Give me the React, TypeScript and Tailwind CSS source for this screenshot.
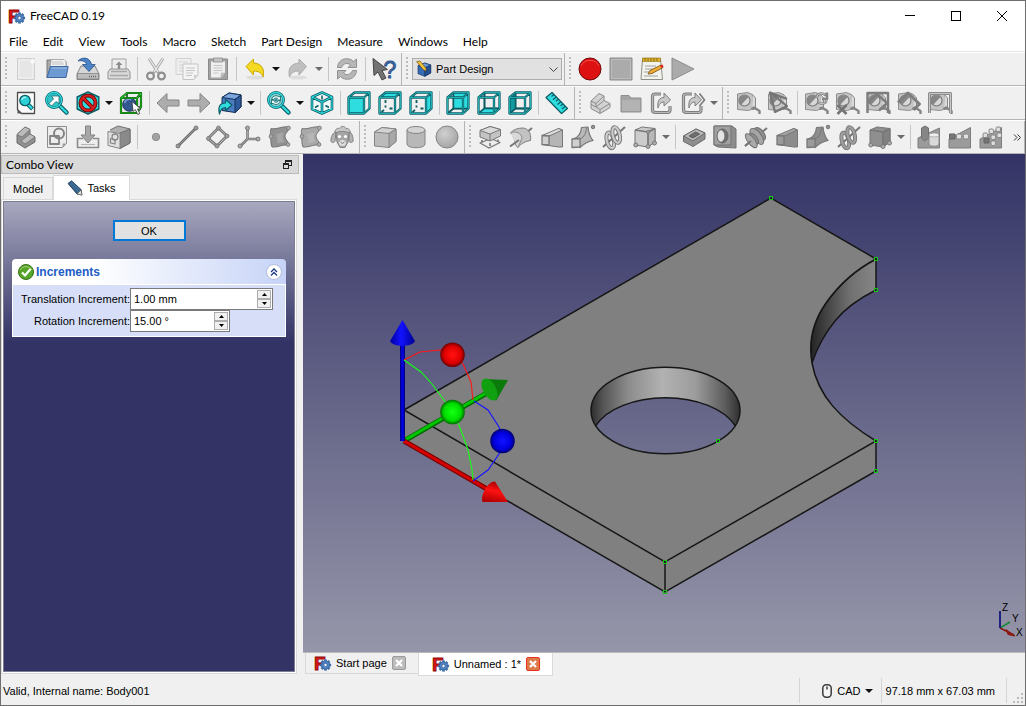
import { useState } from "react"
import type { ReactNode } from "react"

type IconProps = { children: ReactNode; size?: number }

const Icon = ({ children, size = 24 }: IconProps) => (
  <svg width={size} height={size} viewBox="0 0 24 24" fill="none" strokeLinejoin="round" className="shrink-0 overflow-visible" aria-hidden="true">
    {children}
  </svg>
)

const G = "#8a8a8a"
const D = "#777777"
const M = "#aeaeae"
const TEAL = "#2edde0"
const TEAL_DARK = "#0c5c63"

const GEAR_TEETH = [0, 45, 90, 135, 180, 225, 270, 315]

const FreeCadLogo = () => (
  <svg width="16" height="16" viewBox="0 0 16 16" className="shrink-0 overflow-visible" aria-hidden="true">
    <text x="-1" y="14.5" fontSize="19" fontWeight="700" fontFamily="Liberation Sans, sans-serif" fill="#e01515" stroke="#8a0b0b" strokeWidth="0.9">F</text>
    <g transform="translate(10.5 10)">
      {GEAR_TEETH.map((a) => (
        <rect key={a} x="-1.3" y="-5.6" width="2.6" height="3" fill="#3f6ea8" transform={`rotate(${a})`} />
      ))}
      <circle r="4.2" fill="#4f82c0" stroke="#2d5590" strokeWidth="0.6" />
      <circle r="1.6" fill="#fff" stroke="#2d5590" strokeWidth="0.6" />
    </g>
  </svg>
)

/* ---------- file & edit ---------- */

const NewIcon = () => (
  <Icon>
    <path d="M3.500 1.500h17v21h-17z" fill="#ececec" stroke="#cfcfcf" />
    <path d="M6 4h12v16H6z" fill="#e6e6e6" />
    <circle cx="18.500" cy="4.500" r="2.800" fill="#f8f8f8" stroke="#dcdcdc" strokeWidth="0.6" />
  </Icon>
)

const OpenIcon = () => (
  <Icon>
    <path d="M2 21V3h7l1.500 2H21v5" fill="#a9a9a9" stroke="#787878" />
    <path d="M6 2.500h13l2 2V12H5z" fill="#f2f2f2" stroke="#9a9a9a" strokeWidth="0.8" />
    <path d="M7 5h11M7 7h12" stroke="#b5b5b5" strokeWidth="0.8" />
    <path d="M5.500 9.500H23.200L21 20.500H2z" fill="#6d9ad0" stroke="#3c67a3" />
    <path d="M6.500 11H22" stroke="#9fc0e6" />
  </Icon>
)

const SaveIcon = () => (
  <Icon>
    <path d="M5 9h14l4 8v5.500H1V17z" fill="#d6d6d6" stroke="#858585" />
    <path d="M1.500 16.500h21v5.500h-21z" fill="#bdbdbd" stroke="#858585" strokeWidth="0.8" />
    <path d="M13 19.500h7" stroke="#666" strokeDasharray="1 1" strokeWidth="1.500" />
    <path d="M2 4C6-.5 14 0 15.500 7.500h3.700L13 14.500 6.500 7.500h4C10 4.500 6 3 2 4z" fill="#4c82c6" stroke="#265089" strokeWidth="0.8" />
  </Icon>
)

const PrintIcon = () => (
  <Icon>
    <path d="M5 13V2h14v11" fill="#ededed" stroke="#a2a2a2" />
    <path d="M10.800 12V8H8.500L12 4.500 15.500 8h-2.300v4z" fill="#8d8d8d" />
    <path d="M3 12h18l2 3v7H1v-7z" fill="#dadada" stroke="#929292" />
    <path d="M4 14.500h16M3 18.500h18" stroke="#a7a7a7" strokeWidth="1.600" />
  </Icon>
)

const CutIcon = () => (
  <Icon>
    <path d="M5 1.500L14.500 16M19 1.500L9.500 16" stroke="#a5a5a5" strokeWidth="3" />
    <path d="M5 1.500L14 15M19 1.500L10 15" stroke="#efefef" strokeWidth="1.300" />
    <circle cx="6.500" cy="19" r="3.400" stroke="#8e8e8e" strokeWidth="2.200" />
    <circle cx="17.500" cy="19" r="3.400" stroke="#8e8e8e" strokeWidth="2.200" />
  </Icon>
)

const CopyIcon = () => (
  <Icon>
    <path d="M1 1.500h15v16H1z" fill="#eeeeee" stroke="#d2d2d2" />
    <path d="M4 5h9M4 8h9M4 11h5M4 14h5" stroke="#d4d4d4" />
    <path d="M8 7h15v11l-4 4.500H8z" fill="#f4f4f4" stroke="#c4c4c4" />
    <path d="M11 11h9M11 13.500h9M11 16h7M11 18.500h6" stroke="#c4c4c4" strokeWidth="1.200" />
    <path d="M23 18h-4v4.500z" fill="#d0d0d0" />
  </Icon>
)

const PasteIcon = () => (
  <Icon>
    <path d="M2.500 2h19v20.500h-19z" fill="#a2a2a2" stroke="#8a8a8a" />
    <path d="M5 4.500h14V16l-4 4.500H5z" fill="#efefef" />
    <path d="M19 16h-4v4.500z" fill="#c6c6c6" stroke="#aaa" strokeWidth="0.500" />
    <path d="M7.500 8.500h9M7.500 11h9M7.500 13.500h9M7.500 16h5" stroke="#c5c5c5" />
    <path d="M7.500 1h9v4h-9z" fill="#c4c4c4" stroke="#8a8a8a" strokeWidth="0.800" />
  </Icon>
)

const UndoIcon = ({ off }: { off?: boolean }) => (
  <Icon>
    <ellipse cx="12" cy="20.500" rx="9" ry="2" fill="#dddddd" />
    <path
      d="M3 9.500L10.500 2v4C18 6.500 22 11 20 20c-1.500-4-4-6-9.500-6v4z"
      fill={off ? "#bfbfbf" : "#f5da24"}
      stroke={off ? "#aaaaaa" : "#c9a500"}
      transform={off ? "translate(23.500 0) scale(-1 1)" : undefined}
    />
  </Icon>
)

const RefreshIcon = () => (
  <Icon>
    <path d="M2.500 10.500C3 1 14-.5 18.500 4.500L21.500 2v8.500h-8.500l2.500-2.500C12.500 5 8 6.500 6.500 10.500zM21.500 13.500c-.500 9.500-11.500 11-16 6L2.500 22v-8.500H11L8.500 16c3 3 7.500 1.500 9-2.500z" fill="#b7b7b7" stroke="#909090" />
  </Icon>
)

const WhatsThisIcon = () => (
  <Icon>
    <path d="M1 1.500l1 17 4-3.500 4 8 4-2-4-7.500 5.500-1z" fill="#727272" stroke="#454545" />
    <text x="11.500" y="20.500" fontSize="23" fontFamily="Liberation Sans, sans-serif" fill="#3f6dab" stroke="#2b5188" strokeWidth="0.900">?</text>
  </Icon>
)

const BodyCubeIcon = ({ size = 16 }: { size?: number }) => (
  <Icon size={size}>
    <path d="M3 7l10-4 9 3v12l-9 5-10-4z" fill="#356cb4" stroke="#153666" />
    <path d="M13 10l9-4v12l-9 5z" fill="#254f8c" stroke="#153666" />
    <path d="M3 7l10-4 9 3-9 4z" fill="#6b9ad8" stroke="#153666" />
    <path d="M1 1l5-1 9 11v4l-4-2z" fill="#f4c43a" stroke="#6e4b0c" />
  </Icon>
)

const RecordIcon = () => (
  <Icon>
    <circle cx="12" cy="12" r="11" fill="#dd1111" stroke="#6e0707" />
    <path d="M3 9a10 10 0 0118 0" stroke="#f25050" strokeWidth="1" />
  </Icon>
)
const StopIcon = () => (
  <Icon>
    <path d="M1 1h22v22H1z" fill="#ababab" stroke="#8b8b8b" />
    <path d="M2.500 2.500h19v19h-19z" stroke="#bcbcbc" />
  </Icon>
)
const MacroIcon = () => (
  <Icon>
    <path d="M2.500 2h18l2 20.500H1z" fill="#f3f3ee" stroke="#8f8f84" />
    <path d="M2.500 1h18v3.500h-18z" fill="#e0b52e" stroke="#8a6a12" strokeWidth="0.600" />
    <path d="M5 1v3M8 1v3M11 1v3M14 1v3M17 1v3" stroke="#8a6a12" />
    <path d="M5 9h11M5 12h8M4 15h5M4 19h14" stroke="#a0a0a0" />
    <path d="M8 17l2-3.500L21 8l2 2.500-11 6z" fill="#efab35" stroke="#704808" strokeWidth="0.800" />
    <path d="M20 8.500l2.500-1 1 2.500-2 1z" fill="#e01d1d" />
  </Icon>
)
const PlayIcon = () => (
  <Icon>
    <path d="M1 1l22 11L1 23z" fill="#ababab" stroke="#8b8b8b" />
  </Icon>
)

/* ---------- view ---------- */

const Lens = ({ children }: { children?: ReactNode }) => (
  <>
    <path d="M14 14l7.500 7.500" stroke={TEAL_DARK} strokeWidth="4.500" strokeLinecap="round" />
    <path d="M14 14l7.500 7.500" stroke={TEAL} strokeWidth="2.200" strokeLinecap="round" />
    <circle cx="9" cy="9" r="7.500" fill="#bdeef0" stroke={TEAL_DARK} strokeWidth="2.800" />
    <circle cx="9" cy="9" r="7.500" stroke={TEAL} strokeWidth="1.300" />
    {children}
  </>
)

const FitAllIcon = () => (
  <Icon>
    <path d="M3.500 1.500h17v21H7.500l-4-4z" fill="#fcfcfc" stroke="#4c4c4c" strokeWidth="1.300" />
    <path d="M3.500 18.500L8 22.500H3.500z" fill="#555" />
    <path d="M13 12.500l5.500 5.500" stroke={TEAL_DARK} strokeWidth="4.200" />
    <path d="M13 12.500l5 5" stroke={TEAL} strokeWidth="2.200" />
    <circle cx="11" cy="9.500" r="5.200" fill="#2bd0d6" stroke={TEAL_DARK} strokeWidth="1.300" />
    <path d="M8 9c0-2 2-3 4-2.500" stroke="#c3f5f5" strokeWidth="1.200" />
  </Icon>
)
const FitSelectionIcon = () => (
  <Icon>
    <Lens>
      <circle cx="9" cy="9" r="6.500" fill="#30c4c9" />
      <path d="M4 12.500L8.500 8 6.500 5H14v7.500L11 10.500l-4.500 4.500z" fill="#fff" stroke={TEAL_DARK} strokeWidth="0.700" />
    </Lens>
  </Icon>
)
const DrawStyleIcon = () => (
  <Icon>
    <path d="M12 .8L22.800 6v12L12 23.200 1.200 18V6z" fill={TEAL} stroke={TEAL_DARK} strokeWidth="1.400" />
    <circle cx="12" cy="12" r="7.500" stroke="#6d0808" strokeWidth="4" />
    <path d="M6.800 6.800l10.400 10.400" stroke="#6d0808" strokeWidth="4" />
    <circle cx="12" cy="12" r="7.500" stroke="#d81e1e" strokeWidth="2.200" />
    <path d="M6.800 6.800l10.400 10.400" stroke="#d81e1e" strokeWidth="2.200" />
  </Icon>
)
const BoxSelectIcon = () => (
  <Icon>
    <path d="M8 2h14v14H8z" stroke="#0b4d0b" strokeWidth="1.600" />
    <circle cx="10.500" cy="13.500" r="6.800" fill="#33588f" stroke="#172f56" />
    <path d="M5.500 12c1-3 4-4 6.500-3.500" stroke="#7ea3d6" strokeWidth="1.500" />
    <path d="M2 7l6-5h14l-4 5zM2 7h16v15H2zM22 2v14l-4 6" stroke="#0b4d0b" strokeWidth="2.200" />
    <path d="M2 7l6-5h14l-4 5zM2 7h16v15H2zM22 2v14l-4 6" stroke="#25c425" strokeWidth="1.100" />
    <path d="M13 10.500l1 10 2.300-2 2.500 5 2-1-2.300-4.500h3.500z" fill="#fff" stroke="#333" strokeWidth="0.800" />
  </Icon>
)
const ArrowIcon = ({ right }: { right?: boolean }) => (
  <Icon>
    <path d="M1 12L11 2.500V9h12v6H11v6.500z" fill="#adadad" stroke="#858585" transform={right ? "translate(24 0) scale(-1 1)" : undefined} />
  </Icon>
)
const LinkIcon = () => (
  <Icon>
    <path d="M4 6.500L11 2l12 2v12l-6 5.500-13-2z" fill="#4a7dc2" stroke="#132e55" />
    <path d="M4 6.500L11 2l12 2-6 4.500z" fill="#7ba4dc" stroke="#132e55" />
    <path d="M17 8.500L23 4v12l-6 5.500z" fill="#2f5b9c" stroke="#132e55" />
    <path d="M1.500 23c-2-8 1-11 6-11V8.500L14 14l-6.500 5.500v-3c-3 0-5 2-6 6.500z" fill={TEAL} stroke={TEAL_DARK} strokeWidth="1.200" />
  </Icon>
)
const ZoomSyncIcon = () => (
  <Icon>
    <Lens>
      <circle cx="9" cy="9" r="6.300" fill="#7fd0d4" />
      <path d="M4.500 8.500C6 4 10 4 12 6l1.500-1v4h-4.500l1.500-1.500C9 6.500 7.500 7 6.500 8.500zM13.500 9.700c-1.500 4.500-5.500 4.500-7.500 2.500l-1.500 1v-4h4.500l-1.500 1.500c1.500 1 3 .500 4-1z" fill="#e8fbfb" stroke={TEAL_DARK} strokeWidth="0.800" />
    </Lens>
  </Icon>
)
const ISO = "M12 1.500L22 6v12l-10 4.500L2 18V6zM2 6l10 5 10-5M12 11v11.500"
const IsoIcon = () => (
  <Icon>
    <path d={ISO} fill="#eefcfc" stroke={TEAL_DARK} strokeWidth="2.600" />
    <path d={ISO} stroke={TEAL} strokeWidth="1.100" />
    <path d="M12 4.500v4M5 16.500l3.500-2M19 16.500l-3.500-2" stroke={TEAL_DARK} strokeWidth="1.500" />
  </Icon>
)

const FACES = {
  front: "1.500,6.500 17,6.500 17,22.500 1.500,22.500",
  top: "1.500,6.500 17,6.500 22.500,1.500 7.500,1.500",
  right: "17,6.500 22.500,1.500 22.500,17.500 17,22.500",
  rear: "7.500,1.500 22.500,1.500 22.500,17.500 7.500,17.500",
  bottom: "1.500,22.500 17,22.500 22.500,17.500 7.500,17.500",
  left: "1.500,6.500 7.500,1.500 7.500,17.500 1.500,22.500",
}
const BACK_EDGES = "M7.500 1.500v16h15M7.500 17.500l-6 5"
const FRONT_EDGES = "M1.500 6.500h15.500v16H1.500zM1.500 6.500l6-5h15l-5.500 5M22.500 1.500v16l-5.500 5"

const CubeFaceIcon = ({ face }: { face: keyof typeof FACES }) => {
  const inFront = face === "top" || face === "right"
  return (
    <Icon>
      {inFront && <path d="M7.500 9v3M7.500 14.500v2M11.500 17.500h3M6 19l-2.500 2" stroke={TEAL_DARK} strokeWidth="1.800" />}
      {!inFront && face !== "front" && <path d={BACK_EDGES} stroke={TEAL_DARK} strokeWidth="1.800" />}
      <polygon points={FACES[face]} fill={face === "left" ? "#129aa0" : TEAL} />
      {!inFront && face !== "front" && <path d={BACK_EDGES} stroke={TEAL_DARK} strokeWidth="1.400" />}
      <path d={FRONT_EDGES} stroke={TEAL_DARK} strokeWidth="2.300" />
      <path d={FRONT_EDGES} stroke="#21b8bd" strokeWidth="0.900" />
    </Icon>
  )
}

const RulerIcon = () => (
  <Icon>
    <path d="M1 6.500L7 1.500 22.500 17.500 16.500 22.500z" fill={TEAL} stroke={TEAL_DARK} strokeWidth="1.200" />
    <path d="M9 3.500l-2.500 2M11.300 6L8 8.800M13.500 8.300L11 10.300M15.800 10.700l-3.300 2.800M18 13l-2.500 2M20.300 15.300L17 18" stroke={TEAL_DARK} strokeWidth="1.200" />
  </Icon>
)

/* ---------- structure ---------- */

const PartIcon = () => (
  <Icon>
    <path d="M3 10l8-7.500 5 2.500v4.500l6 3v4L12 22.500l-9-5z" fill="#d2d2d2" stroke={G} />
    <path d="M3 10l5 2.500 8-7.500M8 12.500v3.500l4 2.500 10-6M12 18.500v4M3 13.500l5 2.500 8-6.500" stroke={G} />
  </Icon>
)
const GroupIcon = () => (
  <Icon>
    <path d="M2 21V4.500h8l2 2.500h10v14z" fill="#a4a4a4" stroke="#8f8f8f" />
    <path d="M3 9h18v11H3z" fill="#b3b3b3" />
  </Icon>
)
const ExportIcon = ({ twice }: { twice?: boolean }) => (
  <Icon>
    <path d="M11 3H5Q2.500 3 2.500 5.500v13Q2.500 21.500 5.500 21.500h12q2.500 0 2.500-2.500v-4" stroke="#7e7e7e" strokeWidth="3.200" />
    <path d="M11 3H5Q2.500 3 2.500 5.500v13Q2.500 21.500 5.500 21.500h12q2.500 0 2.500-2.500v-4" stroke="#b9b9b9" strokeWidth="1.200" />
    <path d="M8 17C7 9 10 6.500 14 6.500V2l6.500 7-6.500 6v-4c-3 0-5 2-6 6z" fill="#c8c8c8" stroke="#7e7e7e" />
    {twice && <path d="M18.500 2.500L23.500 9l-5 6" stroke="#7e7e7e" strokeWidth="1.700" />}
  </Icon>
)

/* ---------- measure ---------- */

const MeasureIcon = ({ kind }: { kind?: "angle" | "refresh" | "clear" | "toggle" | "delta" | "toggle3d" }) => (
  <Icon>
    <path d="M1.500 3l10-1.500 5 2V18l-4 1.500-11-1z" fill="#c4c4c4" stroke="#8e8e8e" />
    <path d="M16.500 3.500l3 3.500V18l-3.500.500" fill="#dadada" stroke="#8a8a8a" />
    <circle cx="8.500" cy="9.500" r="5.500" fill="#d8d8d8" stroke="#787878" strokeWidth="1.200" />
    <path d="M12.500 6a5.500 5.500 0 10-7.500 8z" fill="#868686" />
    <path d="M15.500 18l2.500-1.500L23.500 20v3" stroke="#858585" strokeWidth="2.400" />
    {kind === "angle" && <path d="M3 1.500L8 21 20 15zM3 1.500L20 8" stroke="#757575" strokeWidth="2.200" />}
    {kind === "refresh" && (
      <>
        <path d="M13 6.500c0-4.500 6-5 8-2.500l2-1.500V8h-5M22.500 9.500c-1 3.500-5 4-8 2" stroke="#858585" strokeWidth="2.600" />
        <path d="M13 6.500c0-4.500 6-5 8-2.500M22.500 9.500c-1 3.500-5 4-8 2" stroke="#cacaca" strokeWidth="1" />
      </>
    )}
    {kind === "clear" && <path d="M2.500 14l9 9M11.500 14l-9 9" stroke="#747474" strokeWidth="2.600" />}
    {kind === "toggle" && <path d="M1.500 22V2h20.500v20M1.500 12L11 3 21 12l-8 7.500" stroke="#7e7e7e" strokeWidth="2.500" />}
    {kind === "delta" && <path d="M1 11.500L11 2 22.500 13l-6 6" stroke="#7e7e7e" strokeWidth="3" />}
    {kind === "toggle3d" && <path d="M1.500 22V2.500h21V22" stroke="#8b8b8b" strokeWidth="3" />}
    {kind === "toggle3d" && <path d="M1.500 22V2.500h21V22" stroke="#c6c6c6" strokeWidth="1" />}
  </Icon>
)

/* ---------- part design ---------- */

const BodyIcon = () => (
  <Icon>
    <path d="M3 9.500l8-7.500 5 2.500v4.500l5 3v5L11 23l-8-5z" fill="#8f8f8f" stroke="#6c6c6c" />
    <path d="M3 9.500L11 2l5 2.500L8 12z" fill="#bcbcbc" stroke="#6c6c6c" strokeWidth="0.700" />
    <path d="M7 16l9-7 5 3-10 7z" fill="#bcbcbc" stroke="#6c6c6c" strokeWidth="0.700" />
  </Icon>
)
const SketchIcon = () => (
  <Icon>
    <path d="M2.500 1.500h19v17l-4 4h-15z" fill="#ededed" stroke="#8d8d8d" />
    <path d="M21.500 18.500h-4v4z" fill="#a0a0a0" />
    <circle cx="14" cy="8.500" r="5" stroke="#848484" strokeWidth="2" />
    <path d="M5 11h9v8H5z" stroke="#848484" strokeWidth="1.800" />
  </Icon>
)
const MapSketchIcon = () => (
  <Icon>
    <path d="M7 13.500H1.500v9h21v-9H17" fill="#ededed" stroke="#8c8c8c" strokeWidth="1.600" />
    <path d="M9.500 1h5v9H19l-7 8-7-8h4.500z" fill="#a7a7a7" stroke="#828282" />
    <path d="M5 19.500h14" stroke="#b5b5b5" />
  </Icon>
)
const ValidateIcon = () => (
  <Icon>
    <path d="M3 5l8-4 12 3v14l-10 5.500" fill="#b0b0b0" stroke="#6f6f6f" />
    <path d="M13 8l10-4v14l-10 5.500z" fill="#8a8a8a" stroke="#6f6f6f" />
    <path d="M1 6.500l12 2v15l-12-3z" fill="#e0e0e0" stroke="#858585" />
    <circle cx="8" cy="12" r="3" stroke="#858585" strokeWidth="1.300" />
    <path d="M3.500 13.500l4.500 1v4.500l-4.500-1z" stroke="#858585" strokeWidth="1.200" />
  </Icon>
)
const PointIcon = () => (
  <Icon>
    <circle cx="12" cy="12" r="3.700" fill="#a2a2a2" stroke="#8f8f8f" />
  </Icon>
)
const LineIcon = () => (
  <Icon>
    <path d="M3 21L21 3" stroke="#6f6f6f" strokeWidth="2.600" />
    <path d="M3 21L21 3" stroke="#a5a5a5" strokeWidth="0.800" />
    <circle cx="3" cy="21" r="2" fill="#9b9b9b" stroke={D} />
    <circle cx="21" cy="3" r="2" fill="#9b9b9b" stroke={D} />
  </Icon>
)
const PlaneIcon = () => (
  <Icon>
    <path d="M12.500 3L21 11 11 21 2 13.500z" stroke="#787878" strokeWidth="3" />
    <path d="M12.500 3L21 11 11 21 2 13.500z" stroke="#bdbdbd" strokeWidth="1" />
    <circle cx="12.500" cy="3" r="2" fill="#9b9b9b" stroke={D} strokeWidth="0.800" />
    <circle cx="21" cy="11" r="2" fill="#9b9b9b" stroke={D} strokeWidth="0.800" />
    <circle cx="11" cy="21" r="2" fill="#9b9b9b" stroke={D} strokeWidth="0.800" />
    <circle cx="2.500" cy="13.500" r="2" fill="#9b9b9b" stroke={D} strokeWidth="0.800" />
  </Icon>
)
const CsIcon = () => (
  <Icon>
    <path d="M10.500 2.500V14M10.500 14h11M10.500 14L3 21.500" stroke={D} strokeWidth="2.600" />
    <path d="M10.500 2.500V14M10.500 14h11M10.500 14L3 21.500" stroke="#a9a9a9" strokeWidth="0.900" />
    <circle cx="10.500" cy="3" r="2" fill={M} stroke={D} />
    <circle cx="21" cy="14" r="2" fill={M} stroke={D} />
    <circle cx="3" cy="21" r="2" fill={M} stroke={D} />
  </Icon>
)
const BinderIcon = ({ light }: { light?: boolean }) => (
  <Icon>
    <path d="M3 3.500C8 5 14 .800 21.500 2 21 6 16.500 8.500 17 12c.500 3 4 5 4 8.500-5-2-10 2-17 1.500C2 18 4 15 1.500 11.500 3 9 2 6 3 3.500z" fill={light ? "#a9a9a9" : "#929292"} stroke="#747474" />
    <path d="M8 9c3 0 5-2 8-1-2 2-1 6 0 9-3 0-4 1-7 1 1-3 0-6-1-9z" fill={light ? "#b6b6b6" : "#a6a6a6"} />
    <circle cx="20.500" cy="3" r="1.900" fill={M} stroke={D} strokeWidth="0.800" />
    <circle cx="3" cy="11.500" r="1.900" fill={M} stroke={D} strokeWidth="0.800" />
    <circle cx="20" cy="19.500" r="1.900" fill={M} stroke={D} strokeWidth="0.800" />
  </Icon>
)
const CloneIcon = () => (
  <Icon>
    <path d="M5 9C4 5 7 2.500 9.500 3.500 11 .500 15 1 16 3.500c3-.500 5 2.500 4 5.500z" fill="#c6c6c6" stroke="#8c8c8c" />
    <path d="M6 7C3 7 1 12 .800 16c1 2 3.500 2 4.200 0z" fill="#b4b4b4" stroke="#808080" />
    <path d="M19 7c3 0 4 5 4.200 9-1 2-3.500 2-4.200 0z" fill="#b4b4b4" stroke="#808080" />
    <path d="M6 8c3-2 10-2 13 0l-1 9-3 5.500h-5L7 17z" fill="#a6a6a6" stroke="#808080" />
    <circle cx="9.500" cy="11.500" r="1.600" fill="#fff" />
    <circle cx="15.500" cy="11.500" r="1.600" fill="#fff" />
    <ellipse cx="12.500" cy="18" rx="3.500" ry="3" fill="#dedede" />
    <path d="M10.500 17l2 1.500 2-1.500" stroke="#777" />
  </Icon>
)

const BoxIcon = () => (
  <Icon>
    <path d="M1.500 7L9 2.500l14 1.500v12.500L16 22.500 1.500 21z" fill="#bbbbbb" stroke="#858585" />
    <path d="M1.500 7L9 2.500l14 1.500-7 4.500z" fill="#d2d2d2" stroke="#858585" />
    <path d="M16 8.500L23 4v12.500l-7 6z" fill="#a8a8a8" stroke="#858585" />
  </Icon>
)
const CylinderIcon = () => (
  <Icon>
    <path d="M3 5v14c0 5 18 5 18 0V5" fill="#b8b8b8" stroke="#858585" />
    <ellipse cx="12" cy="5" rx="9" ry="3.500" fill="#d4d4d4" stroke="#858585" />
  </Icon>
)
const SphereIcon = () => (
  <Icon>
    <defs>
      <radialGradient id="sphere-tool" cx="0.400" cy="0.350" r="0.700">
        <stop offset="0" stopColor="#cfcfcf" />
        <stop offset="1" stopColor="#a4a4a4" />
      </radialGradient>
    </defs>
    <circle cx="12" cy="12" r="11" fill="url(#sphere-tool)" stroke="#858585" />
  </Icon>
)

const PadIcon = () => (
  <Icon>
    <path d="M2 18l9 5 11-5.500-9-4z" fill="#ececec" stroke={D} strokeWidth="1.300" />
    <path d="M2 5.500L12 1.500l10.500 3V11L12 16 2 12z" fill="#c4c4c4" stroke={D} />
    <path d="M2 5.500L12 1.500l10.500 3L12 9z" fill="#dadada" stroke={D} />
    <path d="M12 9v7" stroke={D} />
    <path d="M4 15v2M12 18v3M20 14.500V17" stroke={D} strokeWidth="1.600" />
  </Icon>
)
const RevolutionIcon = () => (
  <Icon>
    <path d="M17 8l6-5" stroke={D} strokeWidth="2" />
    <path d="M1.500 8C4 4.500 9 3 14 3c5 .500 8.500 5 7.500 12.500C18 16 12 18 9 22.500 5 21 7 12 1.500 8z" fill="#c2c2c2" stroke="#808080" />
    <path d="M1.500 8C7 5.500 12 8 13 13l-4 9.500" fill="#d8d8d8" stroke="#8c8c8c" />
    <path d="M1 21.500L10 15" stroke={D} strokeWidth="2" />
  </Icon>
)
const GrooveIcon = () => (
  <Icon>
    <path d="M1 21L23 3" stroke={D} strokeWidth="2" />
    <g stroke="#707070" transform="rotate(-38 12 12)">
      <ellipse cx="17" cy="12" rx="4" ry="7.500" fill="#8f8f8f" />
      <ellipse cx="13" cy="12" rx="4.500" ry="9.500" fill="#a5a5a5" />
      <ellipse cx="9" cy="12" rx="3.500" ry="6.500" fill="#8f8f8f" />
      <ellipse cx="6" cy="12" rx="3.500" ry="8.500" fill="#aaaaaa" />
    </g>
    <path d="M1 21l6-5" stroke={D} strokeWidth="1.800" />
  </Icon>
)
const LoftIcon = ({ dark }: { dark?: boolean }) => (
  <Icon>
    <path d="M9 10.500L18.500 3.500l4 1.500V22l-4 0L2 19.500z" fill={dark ? "#8c8c8c" : "#b5b5b5"} stroke={D} />
    <path d="M2 10.500L18.500 3.500l4 1.500-13.500 6z" fill={dark ? "#a4a4a4" : "#dedede"} stroke={D} />
    <path d="M2 10.500l7 .500v9l-7-.500z" fill={dark ? "#9a9a9a" : "#d0d0d0"} stroke={D} strokeWidth="1.300" />
  </Icon>
)
const SweepIcon = ({ dark }: { dark?: boolean }) => (
  <Icon>
    <path d="M3 13.500C8 12 10 8 10.500 2.500l6.500-.500C17.500 8 19 12 22 15.500c-5 1-9 3-13 7z" fill={dark ? "#8e8e8e" : "#b8b8b8"} stroke={D} strokeWidth="1.200" />
    <path d="M9 14C13.500 12 15 8 15.500 3" stroke={D} />
    <path d="M1 14l8-.500V22l-8 .500z" fill={dark ? "#9c9c9c" : "#d0d0d0"} stroke={D} strokeWidth="1.300" />
    <circle cx="22" cy="2" r="1.500" fill={M} stroke={D} strokeWidth="1.300" />
  </Icon>
)
const COILS = [7, 15]
const HelixIcon = ({ dark }: { dark?: boolean }) => (
  <Icon>
    <path d="M1 22L23 2" stroke={D} strokeWidth="2" />
    <g transform="rotate(-42 12 12)">
      {COILS.map((x) => (
        <g key={x} transform={`rotate(28 ${x} 12)`}>
          <ellipse cx={x} cy="12" rx="3.500" ry="8" stroke={D} strokeWidth="4" />
          <ellipse cx={x} cy="12" rx="3.500" ry="8" stroke={dark ? "#a0a0a0" : "#cccccc"} strokeWidth="2.200" />
        </g>
      ))}
    </g>
  </Icon>
)
const PrimitiveIcon = ({ dark }: { dark?: boolean }) => (
  <Icon>
    <path d="M2 5l7-3 13 1.500V17l-7 5-13-2z" fill={dark ? "#8f8f8f" : "#cccccc"} stroke={D} />
    <path d="M15 7l7-3.500V17l-7 5z" fill={dark ? "#818181" : "#b8b8b8"} stroke={D} />
    <path d="M2 5l13 2 7-3.500M15 7v14" stroke={D} strokeWidth="1.400" />
    <circle cx="2.800" cy="20" r="2" fill={M} stroke={D} />
    <circle cx="15" cy="21.500" r="2" fill={M} stroke={D} />
    <circle cx="21.500" cy="18" r="2" fill={M} stroke={D} />
    {!dark && <circle cx="15" cy="7" r="1.500" fill={M} stroke={D} />}
  </Icon>
)
const PocketIcon = () => (
  <Icon>
    <path d="M1.500 11L14 4l9 4v6l-12 7.500-9.500-5z" fill="#8f8f8f" stroke="#6b6b6b" />
    <path d="M1.500 11L14 4l9 4-12 8z" fill="#bababa" stroke="#6b6b6b" />
    <path d="M7 11l6.500-4 4 2-6.500 4z" fill="#6f6f6f" stroke="#5c5c5c" />
  </Icon>
)
const HoleIcon = () => (
  <Icon>
    <path d="M1 1h18l4 3v19l-18-1-4-2z" fill="#8e8e8e" stroke="#727272" />
    <path d="M1 1h17v19H1z" fill="#a0a0a0" stroke="#727272" />
    <ellipse cx="9.500" cy="11" rx="5.500" ry="7" fill="#707070" stroke="#666" />
    <ellipse cx="8" cy="11" rx="3.400" ry="5.800" fill="#e3e3e3" />
  </Icon>
)
const Wedge = () => <path d="M1 14L22.500 2.500v20.500H1z" fill="#9b9b9b" stroke="#7d7d7d" />
const FilletIcon = () => (
  <Icon>
    <path d="M1 13L22.500 3v20H1z" fill="#9b9b9b" stroke="#7d7d7d" />
    <path d="M4.500 3L8 1l3.500 2v10l-4 3-3-3z" fill="#868686" stroke="#6e6e6e" />
    <path d="M12 10c0-3 10-3 10 0v9c0 3-10 3-10 0z" fill="#d9d9d9" stroke="#888" />
    <ellipse cx="17" cy="10" rx="5" ry="2" fill="#eee" stroke="#999" strokeWidth="0.700" />
  </Icon>
)
const LinearIcon = () => (
  <Icon>
    <Wedge />
    <path d="M1.500 9h5.500v5H1.500z" fill="#777" stroke="#656565" />
    <rect x="8.500" y="9" width="5" height="5" rx="1.500" fill="#e2e2e2" stroke="#888" />
    <rect x="15.500" y="9" width="5" height="5" rx="1.500" fill="#e2e2e2" stroke="#888" />
  </Icon>
)
const MultiIcon = () => (
  <Icon>
    <Wedge />
    <path d="M5 13h5v5H5z" fill="#757575" stroke="#656565" />
    {[[4, 8], [10, 4], [17, 2], [12, 10], [18, 8], [12, 16]].map(([x, y]) => (
      <rect key={`${x}-${y}`} x={x} y={y} width="4.500" height="4.500" rx="1.300" fill="#dedede" stroke="#858585" />
    ))}
  </Icon>
)

/* ---------- toolbars ---------- */

type ToolProps = { label: string; menu?: boolean; disabled?: boolean; children: ReactNode }

const Caret = ({ muted }: { muted?: boolean }) => (
  <svg width="8" height="4" viewBox="0 0 8 4" aria-hidden="true">
    <path d="M0 0h8L4 4z" fill={muted ? "#6b6b6b" : "#111111"} />
  </svg>
)

const Tool = ({ label, menu, disabled, children }: ToolProps) => (
  <div className="flex shrink-0">
    <button type="button" aria-label={label} disabled={disabled} className="flex h-8 w-[31px] items-center justify-center hover:bg-sky-100 disabled:hover:bg-transparent">
      {children}
    </button>
    {menu && (
      <button type="button" aria-label={`${label} options`} disabled={disabled} className="flex h-8 w-3 items-center justify-center">
        <Caret muted={disabled} />
      </button>
    )}
  </div>
)

const Sep = () => <div className="mx-px flex h-8 w-1 shrink-0 justify-center py-1"><div className="w-px bg-[#c6c6c6]" /></div>

const Toolbar = ({ label, last, children }: { label: string; last?: boolean; children: ReactNode }) => (
  <div role="toolbar" aria-label={label} className={`flex shrink-0 items-stretch pr-0.5 ${last ? "" : "border-r border-[#b4b4b4]"}`}>
    <div className="flex w-[9px] justify-center py-1">
      <div className="w-0.5 bg-[repeating-linear-gradient(to_bottom,#bdbdbd_0_2px,transparent_2px_4px)]" />
    </div>
    <div className="flex items-center">{children}</div>
  </div>
)

const ToolRow = ({ children }: { children: ReactNode }) => (
  <div className="flex h-[34px] overflow-hidden border-t border-b border-t-white border-b-[#b4b4b4]">{children}</div>
)

const MENUS = ["File", "Edit", "View", "Tools", "Macro", "Sketch", "Part Design", "Measure", "Windows", "Help"]

const TitleBar = () => (
  <header className="flex h-[30px] items-center bg-white pl-2 font-[Lato,sans-serif] text-xs">
    <FreeCadLogo />
    <h1 className="ml-[5px] flex-1">FreeCAD 0.19</h1>
    <button type="button" aria-label="Minimize" className="flex h-full w-[46px] items-center justify-center">
      <svg width="10" height="10" shapeRendering="crispEdges"><path d="M0 4.500h10" stroke="#000" /></svg>
    </button>
    <button type="button" aria-label="Maximize" className="flex h-full w-[46px] items-center justify-center">
      <svg width="10" height="10"><rect x="0.500" y="0.500" width="9" height="9" fill="none" stroke="#000" /></svg>
    </button>
    <button type="button" aria-label="Close" className="flex h-full w-[46px] items-center justify-center">
      <svg width="10" height="10"><path d="M0 0l10 10M10 0L0 10" stroke="#000" /></svg>
    </button>
  </header>
)

const MenuBar = () => (
  <nav className="flex h-[21px] items-center gap-[15px] border-b border-[#e4e4e4] bg-white pt-0.5 pl-2 font-[Lato,sans-serif] text-xs">
    {MENUS.map((m) => (
      <button key={m} type="button" className="shrink-0">{m}</button>
    ))}
  </nav>
)

const Toolbars = () => (
  <div>
    <ToolRow>
      <Toolbar label="File">
        <Tool label="New"><NewIcon /></Tool>
        <Tool label="Open"><OpenIcon /></Tool>
        <Tool label="Save"><SaveIcon /></Tool>
        <Tool label="Print"><PrintIcon /></Tool>
        <Sep />
        <Tool label="Cut" disabled><CutIcon /></Tool>
        <Tool label="Copy" disabled><CopyIcon /></Tool>
        <Tool label="Paste" disabled><PasteIcon /></Tool>
        <Sep />
        <Tool label="Undo" menu><UndoIcon /></Tool>
        <Tool label="Redo" menu disabled><UndoIcon off /></Tool>
        <Sep />
        <Tool label="Refresh" disabled><RefreshIcon /></Tool>
        <Sep />
        <Tool label="What's this?"><WhatsThisIcon /></Tool>
      </Toolbar>
      <Toolbar label="Workbench">
        <div className="relative ml-px flex items-center">
          <select aria-label="Workbench" className="h-[22px] w-[150px] appearance-none border border-[#adadad] bg-[#e1e1e1] pl-[23px] outline-none">
            <option>Part Design</option>
          </select>
          <span className="pointer-events-none absolute left-1 flex"><BodyCubeIcon /></span>
          <svg className="pointer-events-none absolute right-1" width="9" height="5" viewBox="0 0 9 5" fill="none" aria-hidden="true">
            <path d="M0.500 0.500l4 4 4-4" stroke="#444" />
          </svg>
        </div>
      </Toolbar>
      <Toolbar label="Macro" last>
        <Tool label="Macro recording"><RecordIcon /></Tool>
        <Tool label="Stop macro recording" disabled><StopIcon /></Tool>
        <Tool label="Macros"><MacroIcon /></Tool>
        <Tool label="Execute macro" disabled><PlayIcon /></Tool>
      </Toolbar>
    </ToolRow>
    <ToolRow>
      <Toolbar label="View">
        <Tool label="Fit all"><FitAllIcon /></Tool>
        <Tool label="Fit selection"><FitSelectionIcon /></Tool>
        <Tool label="Draw style" menu><DrawStyleIcon /></Tool>
        <Tool label="Bounding box"><BoxSelectIcon /></Tool>
        <Sep />
        <Tool label="Back" disabled><ArrowIcon /></Tool>
        <Tool label="Forward" disabled><ArrowIcon right /></Tool>
        <Tool label="Go to linked object" menu><LinkIcon /></Tool>
        <Sep />
        <Tool label="Sync view" menu><ZoomSyncIcon /></Tool>
        <Tool label="Isometric"><IsoIcon /></Tool>
        <Sep />
        <Tool label="Front"><CubeFaceIcon face="front" /></Tool>
        <Tool label="Top"><CubeFaceIcon face="top" /></Tool>
        <Tool label="Right"><CubeFaceIcon face="right" /></Tool>
        <Sep />
        <Tool label="Rear"><CubeFaceIcon face="rear" /></Tool>
        <Tool label="Bottom"><CubeFaceIcon face="bottom" /></Tool>
        <Tool label="Left"><CubeFaceIcon face="left" /></Tool>
        <Sep />
        <Tool label="Measure distance"><RulerIcon /></Tool>
      </Toolbar>
      <Toolbar label="Structure">
        <Tool label="Create part" disabled><PartIcon /></Tool>
        <Tool label="Create group" disabled><GroupIcon /></Tool>
        <Tool label="Make link" disabled><ExportIcon /></Tool>
        <Tool label="Make sub-link" menu disabled><ExportIcon twice /></Tool>
      </Toolbar>
      <Toolbar label="Measure" last>
        <Tool label="Measure linear" disabled><MeasureIcon /></Tool>
        <Tool label="Measure angular" disabled><MeasureIcon kind="angle" /></Tool>
        <Sep />
        <Tool label="Measure refresh" disabled><MeasureIcon kind="refresh" /></Tool>
        <Tool label="Measure clear all" disabled><MeasureIcon kind="clear" /></Tool>
        <Tool label="Measure toggle all" disabled><MeasureIcon kind="toggle" /></Tool>
        <Tool label="Measure toggle 3D" disabled><MeasureIcon kind="delta" /></Tool>
        <Tool label="Measure toggle delta" disabled><MeasureIcon kind="toggle3d" /></Tool>
      </Toolbar>
    </ToolRow>
    <ToolRow>
      <Toolbar label="Part Design helper">
        <Tool label="Create body" disabled><BodyIcon /></Tool>
        <Tool label="Create sketch" disabled><SketchIcon /></Tool>
        <Tool label="Map sketch to face" disabled><MapSketchIcon /></Tool>
        <Tool label="Validate sketch" disabled><ValidateIcon /></Tool>
        <Sep />
        <Tool label="Datum point" disabled><PointIcon /></Tool>
        <Tool label="Datum line" disabled><LineIcon /></Tool>
        <Tool label="Datum plane" disabled><PlaneIcon /></Tool>
        <Tool label="Local coordinate system" disabled><CsIcon /></Tool>
        <Tool label="Shape binder" disabled><BinderIcon /></Tool>
        <Tool label="Sub-object shape binder" disabled><BinderIcon light /></Tool>
        <Tool label="Clone" disabled><CloneIcon /></Tool>
      </Toolbar>
      <Toolbar label="Primitives">
        <Tool label="Box" disabled><BoxIcon /></Tool>
        <Tool label="Cylinder" disabled><CylinderIcon /></Tool>
        <Tool label="Sphere" disabled><SphereIcon /></Tool>
      </Toolbar>
      <Toolbar label="Part Design modeling" last>
        <Tool label="Pad" disabled><PadIcon /></Tool>
        <Tool label="Revolution" disabled><RevolutionIcon /></Tool>
        <Tool label="Additive loft" disabled><LoftIcon /></Tool>
        <Tool label="Additive pipe" disabled><SweepIcon /></Tool>
        <Tool label="Additive helix" disabled><HelixIcon /></Tool>
        <Tool label="Additive primitive" menu disabled><PrimitiveIcon /></Tool>
        <Sep />
        <Tool label="Pocket" disabled><PocketIcon /></Tool>
        <Tool label="Hole" disabled><HoleIcon /></Tool>
        <Tool label="Groove" disabled><GrooveIcon /></Tool>
        <Tool label="Subtractive loft" disabled><LoftIcon dark /></Tool>
        <Tool label="Subtractive pipe" disabled><SweepIcon dark /></Tool>
        <Tool label="Subtractive helix" disabled><HelixIcon dark /></Tool>
        <Tool label="Subtractive primitive" menu disabled><PrimitiveIcon dark /></Tool>
        <Sep />
        <Tool label="Fillet" disabled><FilletIcon /></Tool>
        <Tool label="Linear pattern" disabled><LinearIcon /></Tool>
        <Tool label="Multi transform" disabled><MultiIcon /></Tool>
      </Toolbar>
      <button type="button" aria-label="More tools" className="ml-auto flex w-4 items-center justify-center border-r border-[#b4b4b4]">
        <svg width="8" height="7" viewBox="0 0 8 7" fill="none"><path d="M1 .5l3 3-3 3M4.500 .5l3 3-3 3" stroke="#333" /></svg>
      </button>
    </ToolRow>
  </div>
)

/* ---------- combo view ---------- */

type SpinProps = { id: string; label: string; value: string; onChange: (v: string) => void; step: number; unit: string; width: string }

const SpinRow = ({ id, label, value, onChange, step, unit, width }: SpinProps) => {
  const bump = (by: number) => onChange(`${(parseFloat(value) + by).toFixed(2)} ${unit}`)

  return (
    <div className="flex h-[22px] items-center">
      <label htmlFor={id} className="w-[117px] shrink-0 text-right whitespace-nowrap">{label}</label>
      <div className={`flex h-[22px] border border-[#7a7a7a] bg-white p-px ${width}`}>
        <input id={id} type="text" value={value} onChange={(e) => onChange(e.target.value)} className="min-w-0 flex-1 bg-white pl-0.5 outline-none" />
        <div className="flex w-[14px] flex-col">
          <button type="button" aria-label={`Increase ${id}`} onClick={() => bump(step)} className="flex flex-1 items-center justify-center border border-[#adadad] bg-[#f0f0f0]">
            <svg width="5" height="3"><path d="M0 3h5L2.500 0z" fill="#000" /></svg>
          </button>
          <button type="button" aria-label={`Decrease ${id}`} onClick={() => bump(-step)} className="flex flex-1 items-center justify-center border border-[#adadad] bg-[#f0f0f0]">
            <svg width="5" height="3"><path d="M0 0h5L2.500 3z" fill="#000" /></svg>
          </button>
        </div>
      </div>
    </div>
  )
}

const ComboView = () => {
  const [translation, setTranslation] = useState("1.00 mm")
  const [rotation, setRotation] = useState("15.00 °")

  return (
    <aside className="flex w-[302px] shrink-0 flex-col pt-px pb-0.5">
      <div className="mr-1 flex h-[19px] items-center justify-between border border-[#bcbcbc] bg-[#d9d9d9] pr-1.5 pl-1 font-[Lato,sans-serif] text-xs">
        <h2>Combo View</h2>
        <button type="button" aria-label="Float panel">
          <svg width="9" height="9" viewBox="0 0 9 9" fill="none" shapeRendering="crispEdges">
            <path d="M2.500 3V.500h6v5H6M2.500 1.500h6" stroke="#222" />
            <path d="M.500 3.500h5v5h-5zM.500 4.500h5" stroke="#222" />
          </svg>
        </button>
      </div>
      <div role="tablist" className="flex items-end pt-px pl-0.5">
        <button type="button" role="tab" aria-selected="false" className="h-[22px] w-[50px] border border-b-0 border-[#d9d9d9] bg-[#f0f0f0]">Model</button>
        <button type="button" role="tab" aria-selected="true" className="relative z-10 -mb-px flex h-[25px] w-[77px] items-center justify-center gap-1 border border-b-0 border-[#d9d9d9] bg-white">
          <svg width="16" height="16" viewBox="0 0 16 16" aria-hidden="true">
            <path d="M1 3.500L4.500 .800 14 9.500l1 5.500-5-1z" fill="#2f5d86" stroke="#173753" strokeWidth="0.800" />
            <path d="M2.500 3l9.500 9.500M4 2l9 8.500" stroke="#5f8cb2" strokeWidth="0.700" />
            <path d="M10 14l4-4 1 5z" fill="#e6e0d2" stroke="#444" strokeWidth="0.500" />
          </svg>
          Tasks
        </button>
      </div>
      <div className="mr-[6px] flex flex-1 border border-[#dadada] bg-white p-px">
        <div className="flex-1 border border-[#7d7d92] bg-[linear-gradient(to_bottom,#a8a8bf_0,#333366_140px)] px-2">
          <div className="flex justify-center pt-[18px]">
            <button type="button" className="h-[21px] w-[73px] border-2 border-[#0078d7] bg-[#e1e1e1] leading-4">OK</button>
          </div>
          <section className="mt-[18px]">
            <div className="flex h-[25px] items-center rounded-t bg-[linear-gradient(to_right,#ffffff_30%,#c6d3f7)] pr-1 pl-1.5">
              <svg width="16" height="16" viewBox="0 0 16 16" aria-hidden="true">
                <circle cx="8" cy="8" r="7.500" fill="#57a52b" stroke="#357115" />
                <path d="M2 6a7 7 0 0112 0" stroke="#9fd475" fill="none" />
                <path d="M4 8.500l3 3L12.500 5" stroke="#fff" strokeWidth="2.200" fill="none" />
              </svg>
              <h3 className="ml-0.5 flex-1 text-xs font-bold text-[#215dc6]">Increments</h3>
              <button type="button" aria-label="Collapse" className="flex size-4 items-center justify-center rounded-full border border-[#b5bfdc] bg-white">
                <svg width="8" height="8" viewBox="0 0 8 8" fill="none"><path d="M1 4l3-3 3 3M1 7.500l3-3 3 3" stroke="#1b3a86" strokeWidth="1.300" /></svg>
              </button>
            </div>
            <div className="border border-white bg-[#d6dff7] pt-[3px] pb-1">
              <SpinRow id="translation" label="Translation Increment:" value={translation} onChange={setTranslation} step={1} unit="mm" width="w-[143px]" />
              <SpinRow id="rotation" label="Rotation Increment:" value={rotation} onChange={setRotation} step={15} unit="°" width="w-[100px]" />
            </div>
          </section>
        </div>
      </div>
    </aside>
  )
}

/* ---------- 3D view ---------- */

const VERTICES = [[771, 198], [876, 259], [876, 290], [876, 441], [876, 471], [665, 562], [665, 592], [718, 441]]

const Scene = () => (
  <svg viewBox="303 154 722 498" className="h-full w-full" aria-label="3D view" role="img">
    <defs>
      <linearGradient id="bore">
        <stop offset="0" stopColor="#2e2e2e" />
        <stop offset="0.080" stopColor="#545454" />
        <stop offset="0.250" stopColor="#8c8c8c" />
        <stop offset="0.480" stopColor="#b2b2b2" />
        <stop offset="0.700" stopColor="#9c9c9c" />
        <stop offset="0.900" stopColor="#5c5c5c" />
        <stop offset="1" stopColor="#303030" />
      </linearGradient>
      <linearGradient id="notch">
        <stop offset="0" stopColor="#242424" />
        <stop offset="0.250" stopColor="#444444" />
        <stop offset="0.600" stopColor="#707070" />
        <stop offset="1" stopColor="#868686" />
      </linearGradient>
      <radialGradient id="ball-red"><stop offset="0.100" stopColor="#ff0f0f" /><stop offset="0.700" stopColor="#dd0000" /><stop offset="1" stopColor="#6b0000" /></radialGradient>
      <radialGradient id="ball-green"><stop offset="0.100" stopColor="#0fff0f" /><stop offset="0.700" stopColor="#00dd00" /><stop offset="1" stopColor="#006b00" /></radialGradient>
      <radialGradient id="ball-blue"><stop offset="0.100" stopColor="#0f0fff" /><stop offset="0.700" stopColor="#0000dd" /><stop offset="1" stopColor="#00006b" /></radialGradient>
      <linearGradient id="cone-blue"><stop offset="0" stopColor="#0000a0" /><stop offset="0.450" stopColor="#1212ff" /><stop offset="1" stopColor="#000090" /></linearGradient>
      <linearGradient id="cone-red" x1="0.600" y1="0" x2="0.300" y2="1"><stop offset="0" stopColor="#a00000" /><stop offset="0.450" stopColor="#ff1212" /><stop offset="1" stopColor="#b00000" /></linearGradient>
    </defs>

    {/* inner wall of the round notch */}
    <path d="M876 259C853 271 838 286 826 303 814 320 808 340 812 363 818 345 826 332 835 321 846 307 860 298 876 290z" fill="url(#notch)" stroke="#161616" strokeWidth="1.500" />

    {/* plate, with the see-through part of the hole left open */}
    <path
      fillRule="evenodd"
      d="M404 410L771 198 876 259C853 271 838 286 826 303 814 320 808 340 812 363 818 396 840 419 876 441V471L665 592 404 441zM595.800 425.700A74.500 43.200 0 0 1 735.200 425.700 74.500 43.200 0 0 1 595.800 425.700z"
      fill="#808080"
    />
    <path d="M595.800 425.700A74.500 43.200 0 1 1 735.200 425.700 74.500 43.200 0 0 0 595.800 425.700z" fill="url(#bore)" />
    <g stroke="#161616" strokeWidth="1.500" fill="none">
      <path d="M404 410L771 198 876 259C853 271 838 286 826 303 814 320 808 340 812 363 818 396 840 419 876 441L665 562z" />
      <path d="M404 441L665 592 876 471V441M665 562V592" />
      <ellipse cx="665.500" cy="410.500" rx="74.500" ry="43.200" />
      <path d="M595.800 425.700A74.500 43.200 0 0 1 735.200 425.700" />
    </g>
    {VERTICES.map(([x, y]) => (
      <rect key={`${x}-${y}`} x={x - 1.5} y={y - 1.5} width="3" height="3" fill="none" stroke="#19c219" />
    ))}

    {/* dragger */}
    <path d="M404 441L487 393" stroke="#006a00" strokeWidth="5" />
    <path d="M404 440.500L487 392.500" stroke="#00c800" strokeWidth="2.800" />
    <path d="M404 441L487 489" stroke="#7a0000" strokeWidth="5" />
    <path d="M404 441L487 489" stroke="#d60000" strokeWidth="2.800" />
    <path d="M402.500 441V342" stroke="#000088" strokeWidth="5" />
    <path d="M402.500 441V342" stroke="#0000e0" strokeWidth="2.500" />
    <g fill="none" strokeWidth="1.100">
      <path d="M404 360L420 352 440 350 452 353 463 364 471 382 473 400" stroke="#ff1414" />
      <path d="M404 360L421 372 432 384 444 400 452 412 459 425 468 450 472 470 473 480" stroke="#14ff14" />
      <path d="M474 401L488 410 499 427 504 441 499 454 488 470 473 481" stroke="#1414ff" />
    </g>
    <path d="M402.500 320L415 341c-3 6.500-22 6.500-25 0z" fill="url(#cone-blue)" />
    <path d="M484 379L508 380 496 401z" fill="#0a7a0a" />
    <ellipse cx="489.500" cy="389.500" rx="6.500" ry="12" fill="#10a010" transform="rotate(-28 489.500 389.500)" />
    <path d="M508 502L495 481.500C488 481 480 495 482.500 502z" fill="url(#cone-red)" />
    <circle cx="452.500" cy="354.700" r="12.300" fill="url(#ball-red)" />
    <circle cx="452.500" cy="412" r="12.300" fill="url(#ball-green)" />
    <circle cx="502.500" cy="441" r="12.300" fill="url(#ball-blue)" />
  </svg>
)

const AxisCross = () => (
  <svg width="30" height="42" viewBox="0 0 30 42" className="absolute right-0 bottom-2 overflow-visible" fontSize="10" fontFamily="Liberation Sans, sans-serif" aria-hidden="true">
    <path d="M5 26L15 20" stroke="#1f8a3c" strokeWidth="2" />
    <path d="M5 26L19 33" stroke="#8a1a12" strokeWidth="1.500" />
    <path d="M11 27.500l9 6.500-7-1.500z" fill="#8a1a12" stroke="#8a1a12" />
    <path d="M5 26V9" stroke="#20207f" strokeWidth="2" />
    <text x="7" y="9">Z</text>
    <text x="17" y="20">Y</text>
    <text x="21" y="34">X</text>
  </svg>
)

type DocTabProps = { title: string; active?: boolean }

const DocTab = ({ title, active }: DocTabProps) => (
  <div className={active ? "flex h-[23px] items-center border border-t-0 border-[#d9d9d9] bg-white pr-3 pl-3.5" : "flex h-[21px] items-center border border-t-0 border-r-0 border-[#d9d9d9] pr-3 pl-[9px]"}>
    <FreeCadLogo />
    <button type="button" role="tab" aria-selected={!!active} className="mx-[5px] whitespace-nowrap">{title}</button>
    <button
      type="button"
      aria-label={`Close ${title}`}
      className={active ? "flex size-[14px] items-center justify-center rounded-xs border border-[#e8321e] bg-[#dd7a4a]" : "flex size-[14px] items-center justify-center rounded-xs border border-[#9a9a9a] bg-[#bcbcbc]"}
    >
      <svg width="8" height="8" viewBox="0 0 8 8"><path d="M1 1l6 6M7 1L1 7" stroke="#fff" strokeWidth="2.200" /></svg>
    </button>
  </div>
)

const StatusBar = () => (
  <footer className="flex h-[29px] items-stretch justify-between py-0.5 pl-0.5">
    <p className="self-center">Valid, Internal name: Body001</p>
    <div className="flex items-stretch">
      <button type="button" className="flex items-center border-l border-[#d5d5d5] pr-2 pl-[22px]">
        <svg width="10" height="14" viewBox="0 0 10 14" fill="none" aria-hidden="true">
          <rect x="0.800" y="0.800" width="8.400" height="12.400" rx="3.500" fill="#f7f7f7" stroke="#3c3c3c" strokeWidth="1.500" />
          <path d="M5 2.500v3" stroke="#3c3c3c" strokeWidth="1.500" />
        </svg>
        <span className="mr-1 ml-[5px]">CAD</span>
        <Caret />
      </button>
      <span className="flex items-center border-x border-[#d5d5d5] pr-[11px] pl-1">97.18 mm x 67.03 mm</span>
      <svg width="18" height="25" viewBox="0 0 18 25" fill="#b9b9b9" className="self-end" aria-hidden="true">
        <path d="M14 15h2v2h-2zM14 19h2v2h-2zM14 23h2v2h-2zM10 19h2v2h-2zM10 23h2v2h-2zM6 23h2v2H6z" />
      </svg>
    </div>
  </footer>
)

const App = () => (
  <div className="flex h-screen min-h-[400px] flex-col overflow-hidden border border-[#6e6e6e] bg-[#f0f0f0] font-['Liberation_Sans',sans-serif] text-[11px] leading-4 text-black">
    <TitleBar />
    <MenuBar />
    <Toolbars />
    <main className="flex min-h-0 flex-1">
      <ComboView />
      <div className="flex min-w-0 flex-1 flex-col">
        <div className="relative min-h-0 flex-1 bg-[linear-gradient(to_bottom,#333366,#9696aa)]">
          <Scene />
          <AxisCross />
        </div>
        <div role="tablist" className="flex items-start border-t border-[#b8b8b8] pl-0.5">
          <DocTab title="Start page" />
          <DocTab title="Unnamed : 1*" active />
        </div>
      </div>
    </main>
    <StatusBar />
  </div>
)

export default App
